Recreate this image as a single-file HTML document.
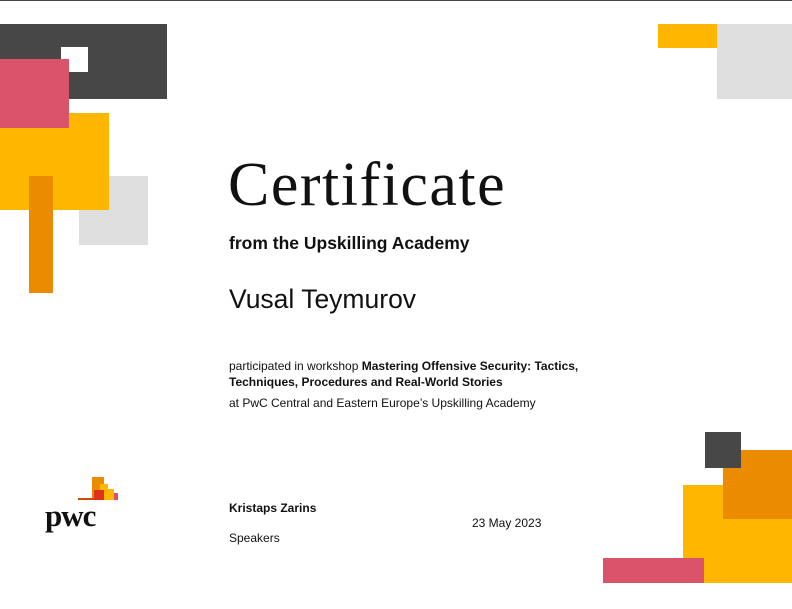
<!DOCTYPE html>
<html><head><meta charset="utf-8"><style>
body{margin:0;width:792px;height:609px;background:#fff;position:relative;overflow:hidden;font-family:"Liberation Sans",sans-serif;color:#111}
.r{position:absolute}
.t{position:absolute;white-space:nowrap}
</style></head><body>
<div class="r" style="left:0;top:0;width:792px;height:1px;background:#444"></div>
<div class="r" style="left:0;top:24px;width:167px;height:75px;background:#474747"></div>
<div class="r" style="left:61px;top:47px;width:27px;height:25px;background:#fff"></div>
<div class="r" style="left:79px;top:176px;width:69px;height:69px;background:#dedede"></div>
<div class="r" style="left:0;top:113px;width:109px;height:97px;background:#ffb600"></div>
<div class="r" style="left:0;top:59px;width:69px;height:69px;background:#db536a"></div>
<div class="r" style="left:29px;top:176px;width:24px;height:117px;background:#eb8c00"></div>

<div class="r" style="left:658px;top:24px;width:59px;height:24px;background:#ffb600"></div>
<div class="r" style="left:717px;top:24px;width:75px;height:75px;background:#dedede"></div>

<div class="r" style="left:683px;top:485px;width:109px;height:98px;background:#ffb600"></div>
<div class="r" style="left:723px;top:450px;width:69px;height:69px;background:#eb8c00"></div>
<div class="r" style="left:705px;top:432px;width:36px;height:36px;background:#474747"></div>
<div class="r" style="left:603px;top:558px;width:101px;height:25px;background:#db536a"></div>

<!-- pwc logo -->
<div class="r" style="left:92px;top:477px;width:12px;height:23px;background:#eb8c00"></div>
<div class="r" style="left:100px;top:484px;width:8px;height:16px;background:#ffb600"></div>
<div class="r" style="left:108px;top:489px;width:6px;height:11px;background:#ffb600"></div>
<div class="r" style="left:114px;top:493px;width:4px;height:7px;background:#db536a"></div>
<div class="r" style="left:94px;top:490px;width:10px;height:10px;background:#e0301e"></div>
<div class="r" style="left:78px;top:498px;width:16px;height:2px;background:#d04a02"></div>
<div class="t" style="left:45px;top:498px;font:bold 31px 'Liberation Serif',serif;letter-spacing:-1px;color:#111">pwc</div>

<div class="t" style="left:228px;top:150px;font:62px 'Liberation Serif',serif;letter-spacing:1.5px;color:#111">Certificate</div>
<div class="t" style="left:229px;top:233px;font:bold 17.5px 'Liberation Sans',sans-serif">from the Upskilling Academy</div>
<div class="t" style="left:229px;top:284px;font:26.5px 'Liberation Sans',sans-serif">Vusal Teymurov</div>
<div class="t" style="left:229px;top:358px;font:12px/16px 'Liberation Sans',sans-serif">participated in workshop <b>Mastering Offensive Security: Tactics,</b><br><b>Techniques, Procedures and Real-World Stories</b></div>
<div class="t" style="left:229px;top:396px;font:12px 'Liberation Sans',sans-serif">at PwC Central and Eastern Europe’s Upskilling Academy</div>
<div class="t" style="left:229px;top:501px;font:bold 12px 'Liberation Sans',sans-serif">Kristaps Zarins</div>
<div class="t" style="left:229px;top:531px;font:12px 'Liberation Sans',sans-serif">Speakers</div>
<div class="t" style="left:472px;top:516px;font:12px 'Liberation Sans',sans-serif">23 May 2023</div>
</body></html>
